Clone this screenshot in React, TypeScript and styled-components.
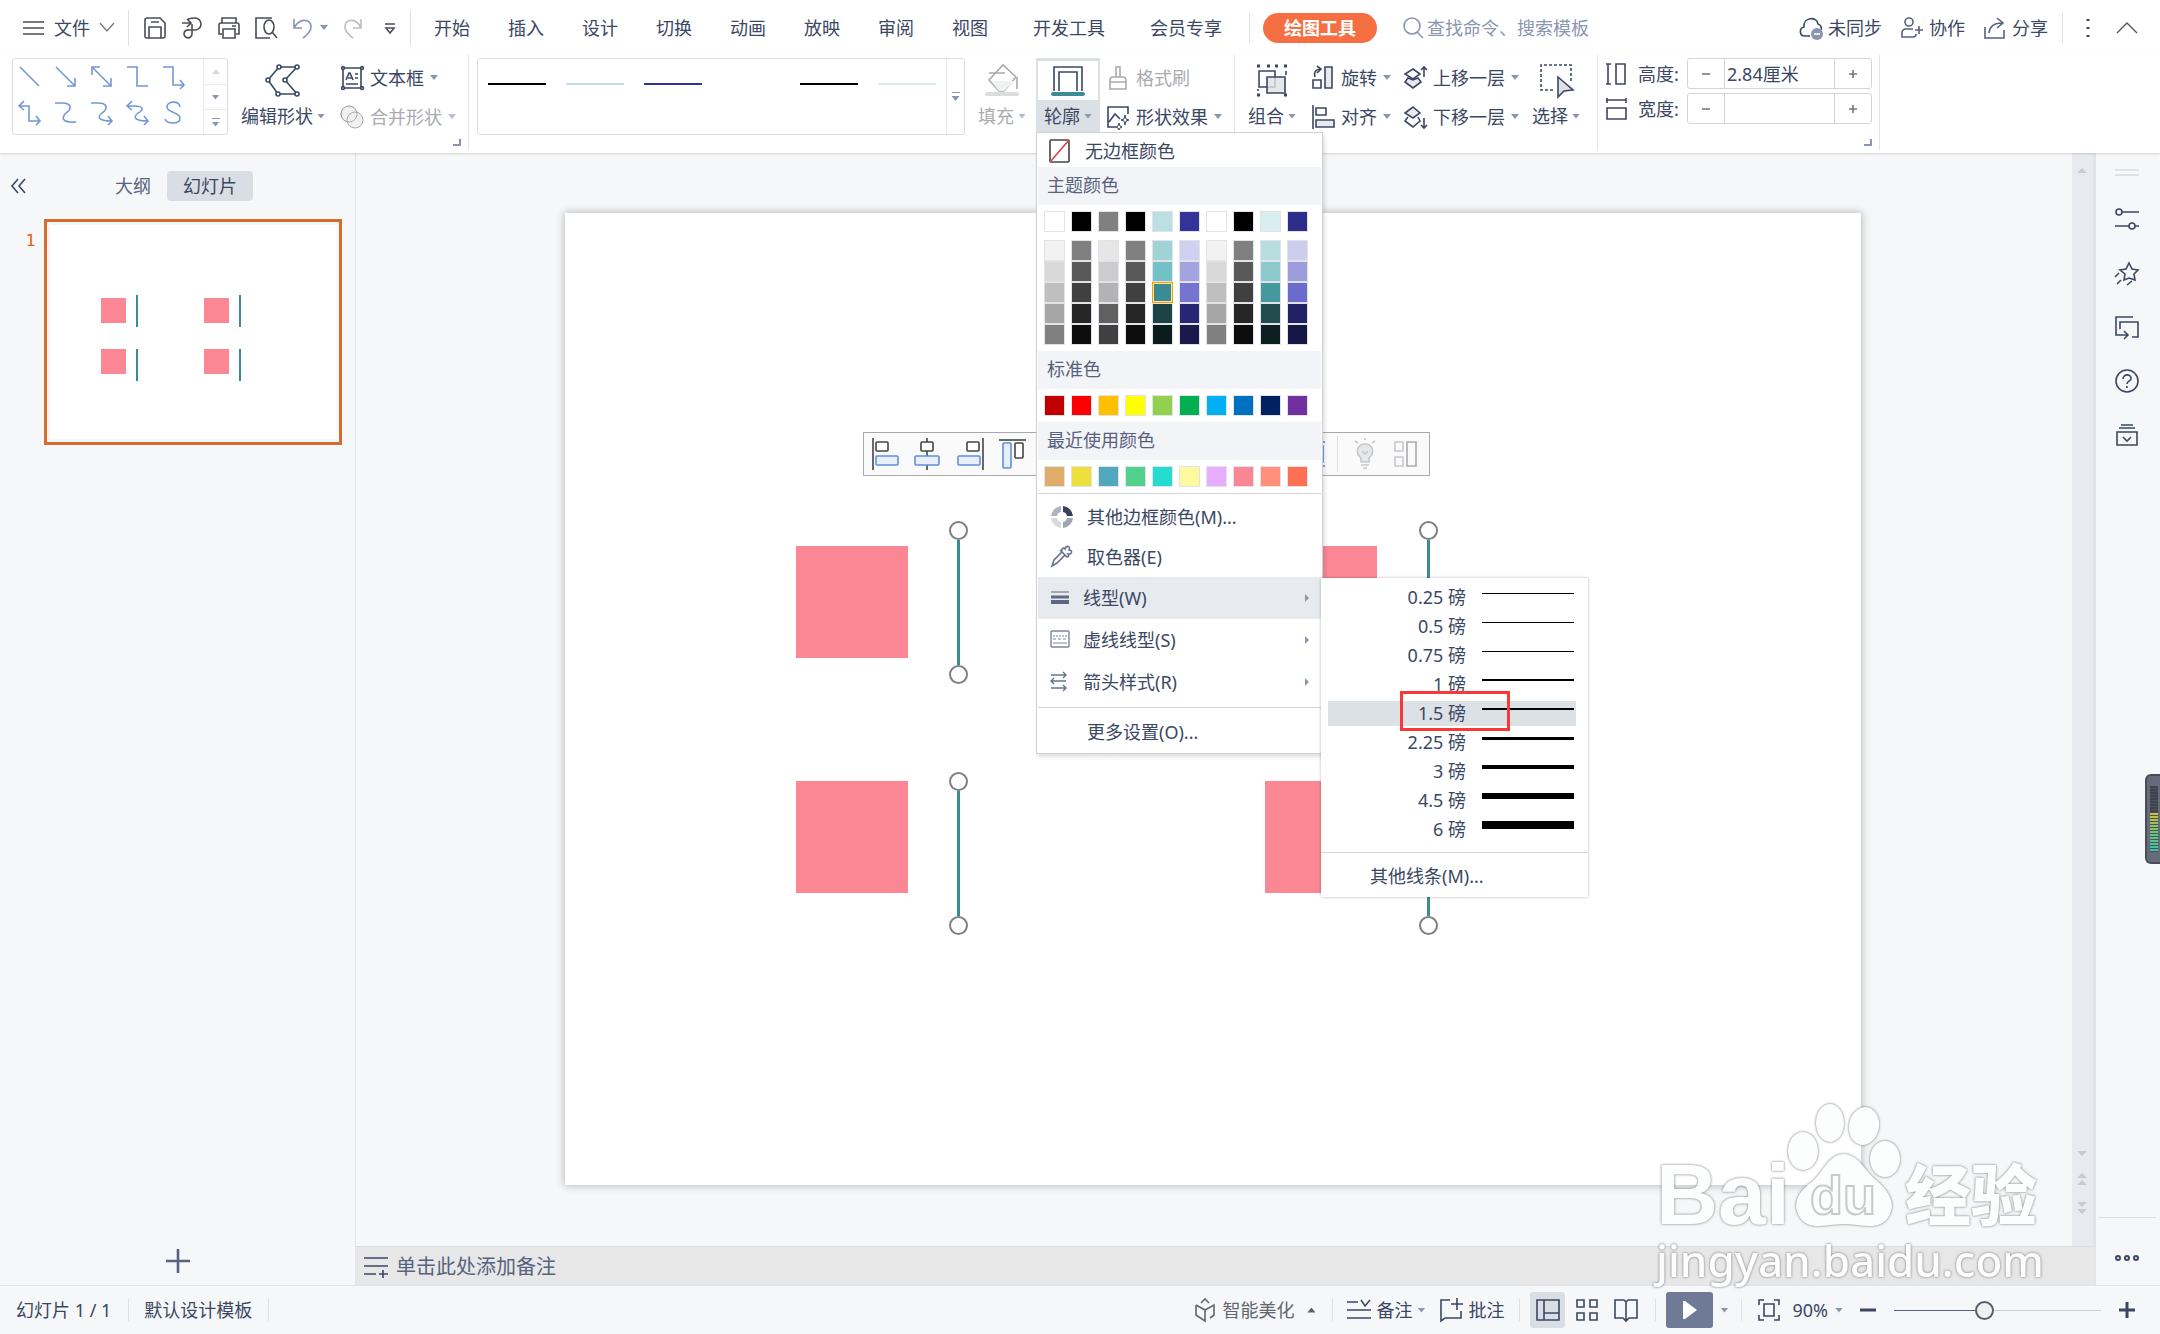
import React from "react";
import styled, { createGlobalStyle, css } from "styled-components";

const ink = "#3b4763";
const soft = "#8a95b0";
const panel = "#f5f7f9";
const line = "#e2e4e9";
const teal = "#3b8b92";
const pink = "#fb8794";

const GlobalStyle = createGlobalStyle`
  *, *::before, *::after { box-sizing: border-box; }
  html, body { margin: 0; padding: 0; height: 100%; }
  body, button, input {
    font-family: "Noto Sans", "Noto Sans CJK SC", sans-serif;
    font-size: 18px;
    line-height: 24px;
    font-weight: 400;
    color: ${ink};
  }
  button { background: none; border: 0; padding: 0; margin: 0; cursor: pointer; white-space: nowrap; }
`;

const Page = styled.div`
  display: flex;
  flex-direction: column;
  height: 100vh;
  background: ${panel};
  overflow: hidden;
`;

/* ---------- icons ---------- */

const Svg = styled.svg`
  display: block;
  flex: none;
  fill: none;
  stroke: currentColor;
  overflow: visible;
`;

type IconProps = { w?: number; h?: number; sw?: number; color?: string; children: React.ReactNode };
const Icon = ({ w = 24, h = 24, sw = 1.6, color, children }: IconProps) => (
  <Svg width={w} height={h} viewBox={`0 0 ${w} ${h}`} strokeWidth={sw} color={color} aria-hidden="true">
    {children}
  </Svg>
);

const Caret = styled.span<{ $dim?: boolean; $up?: boolean }>`
  flex: none;
  width: 8px;
  height: 5px;
  background: ${(p) => (p.$up ? "#5c5f66" : p.$dim ? "#b6bdcc" : soft)};
  clip-path: ${(p) => (p.$up ? "polygon(50% 0, 100% 100%, 0 100%)" : "polygon(0 0, 100% 0, 50% 100%)")};
`;

const Rule = styled.span<{ $h?: number; $l?: number; $r?: number }>`
  flex: none;
  width: 1px;
  height: ${(p) => p.$h ?? 36}px;
  margin: 0 ${(p) => p.$r ?? 14}px 0 ${(p) => p.$l ?? 14}px;
  background: #dfe1e6;
`;

/* ---------- top bar ---------- */

const TopBar = styled.header`
  display: flex;
  align-items: center;
  flex: none;
  height: 55px;
  padding: 0 22px;
  background: #fff;
`;

const FileButton = styled.button`
  display: flex;
  align-items: center;
  gap: 10px;
`;

const QuickBar = styled.div`
  display: flex;
  align-items: center;
  gap: 13px;
`;

const QuickButton = styled.button<{ $color?: string }>`
  display: flex;
  align-items: center;
  gap: 5px;
  color: ${(p) => p.$color ?? "#4a4d55"};
`;

const Tabs = styled.nav`
  display: flex;
  align-items: center;
`;

const Tab = styled.button<{ $wide?: boolean }>`
  padding: 0 19px;
  margin-left: ${(p) => (p.$wide ? 7 : 0)}px;
`;

const ActiveTab = styled.button`
  height: 30px;
  padding: 0 21px;
  border-radius: 15px;
  background: #f66f43;
  color: #fff;
  font-weight: 700;
`;

const Search = styled.label`
  display: flex;
  align-items: center;
  gap: 2px;
  margin-left: 24px;
  color: ${soft};
`;

const SearchInput = styled.input`
  width: 180px;
  padding: 0;
  border: 0;
  outline: 0;
  background: none;
  &::placeholder { color: ${soft}; opacity: 1; }
`;

const TopActions = styled.div`
  display: flex;
  align-items: center;
  gap: 18px;
  margin-left: auto;
`;

const IconButton = styled.button<{ $gap?: number; $color?: string }>`
  display: flex;
  align-items: center;
  gap: ${(p) => p.$gap ?? 5}px;
  color: ${(p) => p.$color ?? ink};
`;

/* ---------- ribbon ---------- */

const Ribbon = styled.div`
  position: relative;
  z-index: 5;
  display: flex;
  align-items: flex-start;
  flex: none;
  height: 98px;
  padding-left: 12px;
  background: #fff;
  box-shadow: 0 1px 2px rgba(0, 0, 0, 0.16);
`;

const Group = styled.section<{ $pad?: number }>`
  position: relative;
  display: flex;
  align-items: flex-start;
  flex: none;
  height: 95px;
  padding: 3px ${(p) => p.$pad ?? 12}px 0 0;
  border-right: 1px solid ${line};
`;

const Launcher = styled.button`
  position: absolute;
  right: 7px;
  bottom: 4px;
  width: 8px;
  height: 7px;
  border: solid ${soft};
  border-width: 0 2px 2px 0;
`;

const ShapeGallery = styled.div`
  display: grid;
  grid-template-columns: 1fr 24px;
  width: 216px;
  height: 77px;
  border: 1px solid #dcdee2;
  border-radius: 3px;
`;

const ShapeGrid = styled.div`
  display: grid;
  grid-template-columns: repeat(5, 36px);
  grid-template-rows: repeat(2, 36px);
  align-items: center;
  padding-left: 5px;
`;

const GalleryScroll = styled.div`
  display: grid;
  grid-template-rows: repeat(3, 1fr);
  border-left: 1px solid #e8eaee;
  & > button { display: flex; flex-direction: column; gap: 3px; align-items: center; justify-content: center; }
  & > button + button { border-top: 1px solid #e8eaee; }
`;

const Bar = styled.span`
  width: 8px;
  height: 1px;
  background: ${soft};
`;

const BigButton = styled.button<{ $dim?: boolean }>`
  display: flex;
  flex-direction: column;
  align-items: center;
  gap: 7px;
  margin-left: 13px;
  padding-top: 5px;
  color: ${(p) => (p.$dim ? "#a9abb0" : ink)};
`;

const Caption = styled.span`
  display: flex;
  align-items: center;
  gap: 4px;
`;

const Stack = styled.div<{ $l?: number }>`
  display: flex;
  flex-direction: column;
  margin-left: ${(p) => p.$l ?? 15}px;
`;

const SmallButton = styled.button<{ $dim?: boolean }>`
  display: flex;
  align-items: center;
  gap: 6px;
  height: 39px;
  color: ${(p) => (p.$dim ? "#a9abb0" : ink)};
`;

const StyleGallery = styled.div`
  display: grid;
  grid-template-columns: 1fr 18px;
  width: 488px;
  height: 77px;
  margin-left: 8px;
  border: 1px solid #dcdee2;
  border-radius: 3px;
`;

const StyleLines = styled.div`
  display: flex;
  gap: 20px;
  padding: 24px 10px;
`;

const StyleLine = styled.button<{ $c: string }>`
  width: 58px;
  height: 2px;
  background: ${(p) => p.$c};
`;

const MoreStyles = styled.button`
  display: flex;
  flex-direction: column;
  gap: 3px;
  align-items: center;
  justify-content: center;
  border-left: 1px solid #e8eaee;
`;

const OutlineWrap = styled.div`
  position: relative;
  margin-left: 10px;
`;

const OutlineButton = styled.button`
  display: flex;
  flex-direction: column;
  align-items: center;
  gap: 4px;
  width: 64px;
  height: 74px;
  padding: 3px 2px;
  background: #dbe0e5;
`;

const OutlineFace = styled.span`
  display: flex;
  align-items: center;
  justify-content: center;
  width: 60px;
  height: 39px;
  background: #fff;
`;

const SizeFields = styled.div`
  display: flex;
  flex-direction: column;
  gap: 4px;
  margin-left: 8px;
`;

const SizeRow = styled.div`
  display: grid;
  grid-template-columns: 32px 49px 185px;
  align-items: center;
  height: 31px;
`;

const Stepper = styled.div`
  display: grid;
  grid-template-columns: 36px 1fr 36px;
  height: 31px;
  border: 1px solid #d3d5da;
  border-radius: 3px;
`;

const StepButton = styled.button`
  display: flex;
  align-items: center;
  justify-content: center;
  color: #777;
`;

const StepInput = styled.input`
  min-width: 0;
  padding: 0 2px;
  border: solid #d3d5da;
  border-width: 0 1px;
  outline: 0;
  background: none;
`;

/* ---------- outline menu ---------- */

const Menu = styled.div`
  position: absolute;
  z-index: 10;
  top: 100%;
  left: 0;
  width: 287px;
  padding: 1px;
  background: #fff;
  border: 1px solid #cfd0d3;
  box-shadow: 2px 3px 4px rgba(0, 0, 0, 0.12);
`;

const NoneRow = styled.button`
  display: flex;
  align-items: center;
  gap: 13px;
  width: 100%;
  height: 33px;
  padding: 0 10px;
`;

const MenuTitle = styled.h2`
  margin: 0;
  padding: 6px 9px 8px;
  background: #f3f4f7;
  color: #56627f;
  font-size: 18px;
  line-height: 24px;
  font-weight: 400;
`;

const Palette = styled.div`
  display: flex;
  flex-direction: column;
  gap: 8px;
  padding: 6px;
`;

const SwatchGrid = styled.div`
  display: grid;
  grid-template-columns: repeat(10, 21px);
  column-gap: 6px;
`;

const Swatch = styled.button<{ $c: string; $on?: boolean }>`
  width: 21px;
  height: 21px;
  border: 1px solid #e2e3e8;
  background: ${(p) => p.$c};
  ${(p) =>
    p.$on &&
    css`
      border-color: #f7a100;
      box-shadow: inset 0 0 0 1px #ffe1a0;
    `}
`;

const MenuRule = styled.hr`
  height: 1px;
  margin: 0;
  border: 0;
  background: #d3d4d7;
`;

const MenuList = styled.div`
  padding: 3px 0 4px;
`;

const ItemWrap = styled.div`
  position: relative;
`;

const MenuItem = styled.button<{ $tall?: boolean; $on?: boolean }>`
  display: flex;
  align-items: center;
  gap: ${(p) => (p.$tall ? 9 : 13)}px;
  width: 100%;
  height: ${(p) => (p.$tall ? 42 : 40)}px;
  padding: 0 12px;
  background: ${(p) => (p.$on ? "#e7eaef" : "none")};
`;

const MoreItem = styled.button`
  display: block;
  width: 100%;
  height: 44px;
  padding: 4px 0 0 49px;
  text-align: left;
`;

const Arrow = styled.span`
  width: 4px;
  height: 8px;
  margin-left: auto;
  background: ${soft};
  clip-path: polygon(0 0, 100% 50%, 0 100%);
`;

const SubMenu = styled.div`
  position: absolute;
  z-index: 11;
  top: 1px;
  left: 100%;
  width: 267px;
  background: #fff;
  box-shadow: 0 0 3px rgba(0, 0, 0, 0.28);
`;

const WeightList = styled.div`
  position: relative;
  display: flex;
  flex-direction: column;
  gap: 4px;
  padding: 7px 12px 10px 7px;
`;

const WeightRow = styled.button<{ $on?: boolean }>`
  display: grid;
  grid-template-columns: 138px 92px;
  column-gap: 16px;
  height: 25px;
  background: ${(p) => (p.$on ? "#dce1e5" : "none")};
  text-align: right;
`;

const WeightCell = styled.span`
  display: flex;
  align-items: center;
  height: 16px;
`;

const WeightLine = styled.span<{ $h: number }>`
  width: 100%;
  height: ${(p) => p.$h}px;
  background: #000;
`;

const Highlight = styled.span`
  position: absolute;
  top: 113px;
  left: 79px;
  width: 110px;
  height: 40px;
  border: 3px solid #fb3737;
  pointer-events: none;
`;

const OtherLines = styled.button`
  display: block;
  width: 100%;
  height: 44px;
  padding: 2px 0 0 49px;
  text-align: left;
`;

/* ---------- workspace ---------- */

const Main = styled.main`
  display: grid;
  grid-template-columns: 356px minmax(0, 1fr) 65px;
  flex: 1;
  min-height: 0;
`;

const Sidebar = styled.aside`
  display: flex;
  flex-direction: column;
  border-right: 1px solid ${line};
`;

const SideTabs = styled.div`
  display: flex;
  align-items: center;
  padding: 18px 0 0 10px;
`;

const SideTab = styled.button<{ $on?: boolean }>`
  height: 30px;
  padding: 0 16px;
  border-radius: 4px;
  color: ${(p) => (p.$on ? ink : "#56627f")};
  background: ${(p) => (p.$on ? "#d9dee4" : "none")};
`;

const Collapse = styled.button`
  margin-right: 72px;
`;

const ThumbRow = styled.div`
  display: grid;
  grid-template-columns: 44px 298px;
  margin-top: 18px;
`;

const ThumbNumber = styled.span`
  padding: 10px 8px 0 0;
  color: #e0641a;
  font-family: "DejaVu Sans", sans-serif;
  font-size: 16px;
  text-align: right;
`;

const Thumb = styled.button`
  height: 226px;
  padding: 3px;
  border: 3px solid #d66b2b;
`;

const ThumbSlide = styled.span`
  position: relative;
  display: block;
  height: 214px;
  background: #fff;
`;

const Mini = styled.span<{ $x: number; $y: number; $w: number; $h: number; $c: string }>`
  position: absolute;
  left: ${(p) => p.$x}px;
  top: ${(p) => p.$y}px;
  width: ${(p) => p.$w}px;
  height: ${(p) => p.$h}px;
  background: ${(p) => p.$c};
`;

const AddSlide = styled.button`
  display: flex;
  justify-content: center;
  margin: auto 0 12px;
`;

const Editor = styled.div`
  display: grid;
  grid-template-columns: minmax(0, 1fr) 23px;
  grid-template-rows: minmax(0, 1fr) 39px;
  position: relative;
`;

const Canvas = styled.div`
  display: flex;
  align-items: center;
  justify-content: center;
  padding: 0 2px 1px 0;
  overflow: hidden;
`;

const Slide = styled.div`
  position: relative;
  flex: none;
  width: 1296px;
  height: 972px;
  background: #fff;
  box-shadow: 0 0 8px 1px rgba(0, 0, 0, 0.24);
`;

const Square = styled.div<{ $x: number; $y: number }>`
  position: absolute;
  left: ${(p) => p.$x}px;
  top: ${(p) => p.$y}px;
  width: 112px;
  height: 112px;
  background: ${pink};
`;

const Connector = styled.div<{ $x: number; $y: number }>`
  position: absolute;
  left: ${(p) => p.$x - 9}px;
  top: ${(p) => p.$y}px;
  display: flex;
  flex-direction: column;
  align-items: center;
  width: 19px;
  height: 163px;
`;

const Handle = styled.span`
  flex: none;
  width: 19px;
  height: 19px;
  border: 2px solid #808080;
  border-radius: 50%;
  background: #fff;
`;

const Stem = styled.span`
  flex: 1;
  width: 3px;
  background: ${teal};
`;

const FloatBar = styled.div`
  position: absolute;
  left: 298px;
  top: 219px;
  display: flex;
  align-items: center;
  gap: 14px;
  width: 567px;
  height: 44px;
  padding: 0 9px 0 8px;
  border: 1px solid #a9a9ab;
  background: #fafafb;
`;

const FloatRight = styled.div`
  display: flex;
  align-items: center;
  gap: 13px;
  margin-left: auto;
`;

const ScrollTrack = styled.div`
  display: flex;
  flex-direction: column;
  align-items: center;
  gap: 17px;
  padding: 15px 1px 32px 0;
  background: #e9eaf0;
  border-right: 2px solid #e2e4ec;
`;

const TrackArrow = styled.button<{ $push?: boolean }>`
  display: block;
  ${(p) => p.$push && "margin-top: auto;"}
`;

const Notes = styled.button`
  grid-column: 1 / -1;
  display: flex;
  align-items: center;
  gap: 8px;
  padding: 2px 8px 0;
  border-top: 1px solid #dcdee3;
  background: #e7e7e7;
  color: #56627f;
  font-size: 20px;
`;

const Dock = styled.aside`
  position: relative;
  display: flex;
  flex-direction: column;
  align-items: center;
  gap: 30px;
  padding: 16px 2px 0 0;
  border-left: 1px solid ${line};
`;

const DockFoot = styled.div`
  display: flex;
  justify-content: center;
  width: 58px;
  height: 68px;
  margin-top: auto;
  padding-top: 28px;
  border-top: 1px solid #dcdee3;
`;

const DockFootButton = styled.button`
  height: 24px;
`;

const Meter = styled.div`
  position: absolute;
  right: 0;
  top: 621px;
  display: flex;
  justify-content: center;
  width: 15px;
  height: 90px;
  padding: 10px 0;
  border: 2px solid #4a4d58;
  border-right: 0;
  border-radius: 6px 0 0 6px;
  background: #666b7c;
`;

const MeterBars = styled.span`
  width: 8px;
  background:
    repeating-linear-gradient(to bottom, transparent 0 2px, #4c505c 2px 3px),
    linear-gradient(to bottom, #3f434e 0 40%, #d8bf36 40%, #7cc56a 65%, #35c3ac);
`;

/* ---------- watermark ---------- */

const Watermark = styled.div`
  position: absolute;
  z-index: 2;
  right: 51px;
  bottom: -5px;
  display: flex;
  flex-direction: column;
  color: #fcfdfd;
  pointer-events: none;
  filter: drop-shadow(0 0 1px rgba(120, 120, 120, 0.6)) drop-shadow(0 0 1px rgba(120, 120, 120, 0.5));
`;

const MarkUrl = styled.span`
  font-size: 44px;
  line-height: 60px;
  font-weight: 500;
`;

/* ---------- status bar ---------- */

const StatusBar = styled.footer`
  display: flex;
  align-items: center;
  flex: none;
  height: 49px;
  padding: 0 23px 0 16px;
  border-top: 1px solid ${line};
`;

const StatusRight = styled.div`
  display: flex;
  align-items: center;
  margin-left: auto;
`;

const ViewSwitch = styled.div`
  display: flex;
  gap: 4px;
`;

const ViewButton = styled.button<{ $on?: boolean }>`
  display: flex;
  align-items: center;
  justify-content: center;
  width: 35px;
  height: 36px;
  border-radius: 3px;
  background: ${(p) => (p.$on ? "#d9dee4" : "none")};
`;

const PlayButton = styled.button`
  display: flex;
  align-items: center;
  justify-content: center;
  width: 47px;
  height: 36px;
  margin-right: 7px;
  border-radius: 3px;
  background: #6f7a96;
`;

const ZoomGroup = styled.div`
  display: flex;
  align-items: center;
  gap: 16px;
`;

const ZoomSlider = styled.input`
  appearance: none;
  width: 207px;
  height: 20px;
  margin: 0;
  background: linear-gradient(to right, #56627f 43%, #c9cdd6 43%) center / 100% 1px no-repeat;
  &::-webkit-slider-thumb {
    appearance: none;
    width: 19px;
    height: 19px;
    border: 2px solid #5c5f66;
    border-radius: 50%;
    background: #f0f0f1;
  }
`;

/* ---------- data ---------- */

const theme = ["#fff", "#000", "#808080", "#000", "#bbe0e3", "#333399", "#fff", "#000", "#daedef", "#2d2d8a"];
const shades = [
  "#f2f2f2", "#808080", "#e6e6e6", "#808080", "#9fd3d6", "#d0d0f0", "#f2f2f2", "#808080", "#b9dee0", "#cdcdee",
  "#d9d9d9", "#595959", "#cccccc", "#595959", "#73c0c6", "#a3a3e0", "#d9d9d9", "#595959", "#8cc9cd", "#9d9ddd",
  "#bfbfbf", "#404040", "#b3b3b3", "#404040", "#3b8b92", "#7575d1", "#bfbfbf", "#404040", "#45989d", "#6b6bcd",
  "#a6a6a6", "#262626", "#606060", "#262626", "#1c4447", "#262673", "#a6a6a6", "#262626", "#234c4e", "#212166",
  "#808080", "#0d0d0d", "#404040", "#0d0d0d", "#0c1b1c", "#19194c", "#808080", "#0d0d0d", "#0d1f20", "#161644",
];
const standard = ["#c00000", "#ff0000", "#ffc000", "#ffff00", "#92d050", "#00b050", "#00b0f0", "#0070c0", "#002060", "#7030a0"];
const recent = ["#e0ac69", "#eee03c", "#4fa8be", "#52d18d", "#26dbd0", "#fcf99f", "#e5aeff", "#fb8794", "#ff917c", "#ff6f52"];
const weights: [string, number][] = [
  ["0.25", 1], ["0.5", 1], ["0.75", 1], ["1", 2], ["1.5", 2], ["2.25", 3], ["3", 4], ["4.5", 6], ["6", 8],
];
const tabs = ["开始", "插入", "设计", "切换", "动画", "放映", "审阅", "视图", "开发工具", "会员专享"];
const spots = [
  [231, 333, 393, 308],
  [700, 333, 863, 308],
  [231, 568, 393, 559],
  [700, 568, 863, 559],
];
const shapePaths = [
  "M2 2 L21 21",
  "M2 2 L21 21 M21 13 V21 H13",
  "M2 2 L21 21 M21 13 V21 H13 M2 10 V2 H10",
  "M1 2 H11 V21 H22",
  "M1 2 H11 V20 H22 M18 15 L22 20 L18 24",
  "M2 5 H11 V20 H22 M18 15 L22 20 L18 24 M6 0 L1 5 L6 9",
  "M1 2 H8 C18 2 18 8 12 12 C6 18 10 22 22 21",
  "M1 2 H8 C18 2 18 8 12 12 C6 17 10 20 22 20 M18 15 L22 20 L18 24",
  "M2 5 H8 C18 5 18 9 12 12 C6 17 10 20 22 20 M18 15 L22 20 L18 24 M6 0 L1 5 L6 9",
  "M18 6 C17 -1 5 0 5 6 C5 12 18 11 18 17 C18 24 5 23 3 18",
];

const Swatches = ({ colors, on }: { colors: string[]; on?: number }) => (
  <SwatchGrid>
    {colors.map((c, i) => (
      <Swatch key={i} $c={c} $on={i === on} aria-label={c} />
    ))}
  </SwatchGrid>
);

const LineMenu = () => (
  <SubMenu>
    <WeightList>
      {weights.map(([name, h]) => (
        <WeightRow key={name} $on={name === "1.5"}>
          <span>{name} 磅</span>
          <WeightCell>
            <WeightLine $h={h} />
          </WeightCell>
        </WeightRow>
      ))}
      <Highlight />
    </WeightList>
    <MenuRule />
    <OtherLines>其他线条(M)...</OtherLines>
  </SubMenu>
);

const OutlineMenu = () => (
  <Menu>
    <NoneRow>
      <Icon>
        <rect x="2" y="1" width="19" height="22" rx="1" stroke="#444" />
        <path d="M2 23 L21 1" stroke="#d8434a" />
      </Icon>
      无边框颜色
    </NoneRow>
    <MenuTitle>主题颜色</MenuTitle>
    <Palette>
      <Swatches colors={theme} />
      <Swatches colors={shades} on={24} />
    </Palette>
    <MenuTitle>标准色</MenuTitle>
    <Palette>
      <Swatches colors={standard} />
    </Palette>
    <MenuTitle>最近使用颜色</MenuTitle>
    <Palette>
      <Swatches colors={recent} />
    </Palette>
    <MenuRule />
    <MenuList>
      <MenuItem>
        <Icon>
          <g stroke="none">
            <path d="M13 1 A11 11 0 0 1 23 11 H17 A5 5 0 0 0 13 7 Z" fill="#36425c" />
            <path d="M23 13 A11 11 0 0 1 13 23 V17 A5 5 0 0 0 17 13 Z" fill="#9fa5b3" />
            <path d="M11 23 A11 11 0 0 1 1 13 H7 A5 5 0 0 0 11 17 Z" fill="#d8dade" />
            <path d="M1 11 A11 11 0 0 1 11 1 V7 A5 5 0 0 0 7 11 Z" fill="#afb4bf" />
          </g>
        </Icon>
        其他边框颜色(M)...
      </MenuItem>
      <MenuItem>
        <Icon color="#68738c">
          <path d="M2 21 L4 15 L12 7 L15 10 L7 18 Z M10 5 L17 12 M12 7 C11 4 13 2 15 4 C16 0 21 1 19 5 C23 5 22 10 18 9 C20 12 17 13 15 10" />
        </Icon>
        取色器(E)
      </MenuItem>
      <ItemWrap>
        <MenuItem $tall $on>
          <Icon color="#5d6780">
            <path d="M1 6 H19" strokeWidth="1" />
            <path d="M1 11 H19" strokeWidth="3" />
            <path d="M1 16 H19" strokeWidth="4" />
          </Icon>
          线型(W)
          <Arrow />
        </MenuItem>
        <LineMenu />
      </ItemWrap>
      <MenuItem $tall>
        <Icon color="#7d879c" sw={1.4}>
          <rect x="1" y="3" width="18" height="16" rx="1" />
          <path d="M3 8 H17" strokeDasharray="2 1" strokeWidth="1" />
          <path d="M3 11 H17" strokeDasharray="3 2" strokeWidth="1" />
          <path d="M3 15 H17" strokeWidth="1" />
        </Icon>
        虚线线型(S)
        <Arrow />
      </MenuItem>
      <MenuItem $tall>
        <Icon color="#68738c" sw={1.4}>
          <path d="M1 5 H16 M13 2 L16 5 L13 8 M16 11 H1 M4 8 L1 11 L4 14 M1 18 H16 M13 15 L16 18 L13 21" />
        </Icon>
        箭头样式(R)
        <Arrow />
      </MenuItem>
    </MenuList>
    <MenuRule />
    <MoreItem>更多设置(O)...</MoreItem>
  </Menu>
);

const Top = () => (
  <TopBar>
    <FileButton>
      <Icon w={22} h={16} color="#4a4d55">
        <path d="M1 2 H22 M1 8 H22 M1 14 H22" />
      </Icon>
      文件
      <Icon w={14} h={9} sw={1.3} color="#777">
        <path d="M0 0 L7 8 L14 0" />
      </Icon>
    </FileButton>
    <Rule $l={14} />
    <QuickBar>
      <QuickButton aria-label="保存">
        <Icon>
          <path d="M4 2 H17 L22 7 V20 Q22 22 20 22 H4 Q2 22 2 20 V4 Q2 2 4 2 Z M6 22 V11 H18 V22 M8 6 H16" />
        </Icon>
      </QuickButton>
      <QuickButton aria-label="输出">
        <Icon>
          <path d="M2 7 H10 M7 3 L11 7 L7 11 M8 3 Q12 2 15 2 A6 6 0 0 1 15 14 H9 A4 4 0 1 0 12 18 V8" />
        </Icon>
      </QuickButton>
      <QuickButton aria-label="打印">
        <Icon>
          <path d="M5 7 V2 H19 V7 M5 18 H2 V9 Q2 7 4 7 H20 Q22 7 22 9 V18 H19 M6 13 H18 V22 H6 Z M15 10 H19" />
        </Icon>
      </QuickButton>
      <QuickButton aria-label="预览">
        <Icon>
          <path d="M11 22 H2 V2 H18 M11 22 H16" />
          <ellipse cx="15" cy="11" rx="5" ry="7" />
          <path d="M18 16 L23 22" />
        </Icon>
      </QuickButton>
      <QuickButton aria-label="撤销" $color={soft}>
        <Icon>
          <path d="M3 3 V12 H11 M3 12 C8 2 20 2 20 11 Q20 16 12 22" />
        </Icon>
        <Caret />
      </QuickButton>
      <QuickButton aria-label="恢复" $color="#bcbfc4">
        <Icon>
          <path d="M20 3 V12 H12 M20 12 C16 2 4 2 4 11 Q4 16 12 22" />
        </Icon>
      </QuickButton>
      <QuickButton aria-label="更多">
        <Icon>
          <path d="M7 8 H17 M8 12 H16 L12 17 Z" />
        </Icon>
      </QuickButton>
    </QuickBar>
    <Rule $l={8} $r={4} />
    <Tabs>
      {tabs.map((t) => (
        <Tab key={t} $wide={t.length > 2}>
          {t}
        </Tab>
      ))}
    </Tabs>
    <Rule $h={30} $l={8} $r={13} />
    <ActiveTab>绘图工具</ActiveTab>
    <Search>
      <Icon>
        <circle cx="11" cy="10" r="8" />
        <path d="M16 16 L22 22" />
      </Icon>
      <SearchInput placeholder="查找命令、搜索模板" />
    </Search>
    <TopActions>
      <IconButton>
        <Icon>
          <path d="M11 20 H6 C0 20 0 12 5 11 C4 1 18 0 19 8 C22 9 23 12 22 14" />
          <circle cx="18" cy="18" r="6" fill={soft} stroke="none" />
          <path d="M15 18 H21" stroke="#fff" />
        </Icon>
        未同步
      </IconButton>
      <IconButton>
        <Icon color="#56627f">
          <circle cx="9" cy="6" r="4" />
          <path d="M13 13 H6 Q2 13 2 17 V21 H13 Q16 21 16 18 M19 10 V18 M15 14 H23" />
        </Icon>
        协作
      </IconButton>
      <IconButton>
        <Icon color="#56627f">
          <path d="M2 11 V22 H21 V14 M6 17 Q7 7 19 7 M14 2 L20 7 L14 12" />
        </Icon>
        分享
      </IconButton>
    </TopActions>
    <Rule $h={30} $l={14} $r={22} />
    <IconButton aria-label="更多选项" $gap={0}>
      <Icon w={6} h={20} sw={3}>
        <path d="M3 1 V3 M3 9 V11 M3 17 V19" />
      </Icon>
    </IconButton>
    <Rule $h={0} $l={12} $r={12} />
    <IconButton aria-label="收起">
      <Icon w={22} h={12} sw={1.4} color="#555">
        <path d="M1 11 L11 1 L21 11" />
      </Icon>
    </IconButton>
  </TopBar>
);

const SizeField = ({ id, label, value, icon }: { id: string; label: string; value: string; icon: React.ReactNode }) => (
  <SizeRow>
    {icon}
    <label htmlFor={id}>{label}</label>
    <Stepper>
      <StepButton aria-label="减小">
        <Icon w={8} h={8}>
          <path d="M0 4 H8" />
        </Icon>
      </StepButton>
      <StepInput id={id} defaultValue={value} />
      <StepButton aria-label="增大">
        <Icon w={8} h={8}>
          <path d="M0 4 H8 M4 0 V8" />
        </Icon>
      </StepButton>
    </Stepper>
  </SizeRow>
);

const Tools = () => (
  <Ribbon>
    <Group>
      <ShapeGallery>
        <ShapeGrid>
          {shapePaths.map((d) => (
            <IconButton key={d} $color="#7597da" aria-label="线条">
              <Icon>
                <path d={d} />
              </Icon>
            </IconButton>
          ))}
        </ShapeGrid>
        <GalleryScroll>
          <button aria-label="上一行">
            <Icon w={8} h={5}>
              <path d="M0 5 L4 0 L8 5 Z" fill="#d3d8e2" stroke="none" />
            </Icon>
          </button>
          <button aria-label="下一行">
            <Caret />
          </button>
          <button aria-label="全部形状">
            <Bar />
            <Caret />
          </button>
        </GalleryScroll>
      </ShapeGallery>
      <BigButton>
        <Icon w={36} h={34}>
          <path d="M14 4 H32 L20 17 L32 31 H13 L3 17 Z" />
          <g fill="#fff">
            <circle cx="14" cy="4" r="2" />
            <circle cx="32" cy="4" r="2" />
            <circle cx="20" cy="17" r="2" />
            <circle cx="32" cy="31" r="2" />
            <circle cx="13" cy="31" r="2" />
            <circle cx="3" cy="17" r="2" />
          </g>
        </Icon>
        <Caption>
          编辑形状
          <Caret />
        </Caption>
      </BigButton>
      <Stack>
        <SmallButton>
          <Icon>
            <path d="M3 2 H21 V22 H3 Z" />
            <path d="M6 14 L9 7 H10 L13 14 M8 12 H12 M15 8 H18 M15 12 H18 M6 18 H18" />
            <g fill="#fff">
              <circle cx="3" cy="2" r="1.4" />
              <circle cx="22" cy="2" r="1.4" />
              <circle cx="3" cy="22" r="1.4" />
              <circle cx="22" cy="22" r="1.4" />
            </g>
          </Icon>
          文本框
          <Caret />
        </SmallButton>
        <SmallButton $dim>
          <Icon sw={1}>
            <circle cx="9" cy="9" r="8" fill="#f1f1f2" />
            <circle cx="15" cy="15" r="8" fill="#f1f1f2" />
            <circle cx="9" cy="9" r="8" />
          </Icon>
          合并形状
          <Caret $dim />
        </SmallButton>
      </Stack>
      <Launcher aria-label="形状选项" />
    </Group>
    <Group>
      <StyleGallery>
        <StyleLines>
          {["#000", "#bbe0e3", "#333399", "#fff", "#000", "#daedef"].map((c, i) => (
            <StyleLine key={i} $c={c} aria-label="线条样式" />
          ))}
        </StyleLines>
        <MoreStyles aria-label="更多样式">
          <Bar />
          <Caret />
        </MoreStyles>
      </StyleGallery>
      <BigButton $dim>
        <Icon w={34} h={34}>
          <path d="M4 17 L18 2 L31 14 L19 28 H14 Z" fill="#fff" />
          <path d="M6 18 H29 L19 28 H14 Z" fill="#f0f1f1" stroke="none" />
          <path d="M4 10 H20 M32 14 V26" />
          <path d="M2 31 H32" stroke="#dcdddf" strokeLinecap="round" strokeWidth="4" />
        </Icon>
        <Caption>
          填充
          <Caret $dim />
        </Caption>
      </BigButton>
      <OutlineWrap>
        <OutlineButton>
          <OutlineFace>
            <Icon w={34} h={32}>
              <path d="M3 26 V2 H31 V26 M8 26 V7 H26 V26" />
              <path d="M2 29 H32" stroke={teal} strokeLinecap="round" strokeWidth="4" />
            </Icon>
          </OutlineFace>
          <Caption>
            轮廓
            <Caret />
          </Caption>
        </OutlineButton>
        <OutlineMenu />
      </OutlineWrap>
      <Stack $l={6}>
        <SmallButton $dim>
          <Icon>
            <path d="M10 11 V1 H14 V11 M4 23 V14 Q4 11 7 11 H17 Q20 11 20 14 V23 Z M4 16 H20" />
          </Icon>
          格式刷
        </SmallButton>
        <SmallButton>
          <Icon>
            <path d="M10 22 H2 V2 H22 V9 M3 17 L9 9 L14 14" />
            <path d="M19 10 L20 14 L23 15 L20 16 L19 20 L18 16 L15 15 L18 14 Z M13 18 L14 21 L16 22 L14 23 L13 25 L12 23 L10 22 L12 21 Z" fill="#fff" strokeWidth="1" />
          </Icon>
          形状效果
          <Caret />
        </SmallButton>
      </Stack>
    </Group>
    <Group $pad={17}>
      <BigButton>
        <Icon w={34} h={34}>
          <path d="M4 8 H20 V24 H4 Z" />
          <path d="M12 14 H30 V30 H12 Z" fill="#dfe1e5" fillOpacity="0.8" />
          <path d="M2 3 H5 M29 3 H32 M2 32 H5 M29 32 H32 M12 3 H15 M20 3 H23" strokeWidth="3" />
          <path d="M31 8 V12 M3 26 V28" />
        </Icon>
        <Caption>
          组合
          <Caret />
        </Caption>
      </BigButton>
      <Stack>
        <SmallButton>
          <Icon>
            <path d="M14 1 H21 V22 H14 Z" fill="#e9eaed" />
            <path d="M10 14 H2 V22 H10 Z M4 11 Q2 4 9 3 M6 0 L10 3 L6 7" />
          </Icon>
          旋转
          <Caret />
        </SmallButton>
        <SmallButton>
          <Icon>
            <path d="M2 0 V24 M5 3 H15 V10 H5 Z" />
            <path d="M5 15 H23 V22 H5 Z" fill="#e9eaed" />
          </Icon>
          对齐
          <Caret />
        </SmallButton>
      </Stack>
      <Stack $l={12}>
        <SmallButton>
          <Icon>
            <path d="M10 3 L17 8 L10 13 L2 8 Z" />
            <path d="M5 12 L2 16 L10 22 L18 16 L15 12 L10 14 Z" fill="#e9eaed" />
            <path d="M21 11 V1 M18 4 L21 1 L24 4" />
          </Icon>
          上移一层
          <Caret />
        </SmallButton>
        <SmallButton>
          <Icon>
            <path d="M10 2 L17 8 L10 13 L2 8 Z" fill="#e9eaed" />
            <path d="M5 12 L2 16 L10 22 L17 16 L15 12 M21 13 V23 M18 20 L21 23 L24 20" />
          </Icon>
          下移一层
          <Caret />
        </SmallButton>
      </Stack>
      <BigButton>
        <Icon w={36} h={34}>
          <path d="M15 27 H3 V2 H33 V20" strokeDasharray="3 2" />
          <path d="M20 14 L35 27 L26 28 L20 34 Z" fill="#dfe1e5" />
        </Icon>
        <Caption>
          选择
          <Caret />
        </Caption>
      </BigButton>
    </Group>
    <Group $pad={7}>
      <SizeFields>
        <SizeField
          id="h"
          label="高度:"
          value="2.84厘米"
          icon={
            <Icon w={20}>
              <path d="M0 2 H5 M0 22 H5 M2 2 V22 M10 2 H19 V22 H10 Z" />
            </Icon>
          }
        />
        <SizeField
          id="w"
          label="宽度:"
          value=""
          icon={
            <Icon w={20}>
              <path d="M0 3 H20 M1 1 V6 M20 1 V6 M1 11 H20 V22 H1 Z" />
            </Icon>
          }
        />
      </SizeFields>
      <Launcher aria-label="大小选项" />
    </Group>
  </Ribbon>
);

const guides = [1, 13, 27];

const FloatTools = () => (
  <FloatBar>
    {guides.map((x, i) => (
      <IconButton key={x} aria-label="对齐">
        <Icon w={28} h={32}>
          <path d={`M${x} 0 V32`} stroke="#444" />
          <rect x={[4, 7, 11][i]} y="4" width="12" height="9" rx="1" stroke="#444" fill="#fff" />
          <rect x={[4, 1, 2][i]} y="18" width={[22, 24, 22][i]} height="9" rx="1" stroke="#5f8fdc" fill="#e8effb" />
        </Icon>
      </IconButton>
    ))}
    <IconButton aria-label="顶端对齐">
      <Icon w={28} h={32}>
        <path d="M1 2 H28" stroke="#444" />
        <rect x="5" y="5" width="8" height="25" rx="1" stroke="#5f8fdc" fill="#e8effb" />
        <rect x="17" y="5" width="8" height="15" rx="1" stroke="#444" fill="#fff" />
      </Icon>
    </IconButton>
    <FloatRight>
      <IconButton aria-label="等尺寸">
        <Icon w={28} h={28} color="#4d86f0">
          <rect x="4" y="6" width="23" height="16" fill="#e8effb" />
          <path d="M20 2 H29 M20 26 H29" />
        </Icon>
      </IconButton>
      <Rule $l={0} $r={0} />
      <IconButton aria-label="灵感">
        <Icon w={28} h={32} color="#c6c8cb">
          <path d="M10 20 C3 14 7 6 14 6 C21 6 25 14 18 20 V24 H10 Z M10 27 H18 M12 30 H16" fill="#e6e7e9" />
          <path d="M11 13 L14 16 L17 13 M14 0 V2 M4 3 L7 5 M24 3 L21 5" />
        </Icon>
      </IconButton>
      <IconButton aria-label="版式">
        <Icon w={28} h={28} color="#c6c8cb">
          <path d="M3 2 H11 V11 H3 Z M3 17 H11 V26 H3 Z" />
          <path d="M15 2 H24 V26 H15 Z" stroke="#a9abae" />
        </Icon>
      </IconButton>
    </FloatRight>
  </FloatBar>
);

const Mark = () => (
  <Watermark>
    <Svg width={386} height={128} viewBox="0 0 386 128" stroke="none" fill="currentColor" style={{ stroke: "none", fill: "currentColor" }}>
      <text x="0" y="122" fontSize="86" fontFamily="Liberation Sans, sans-serif" fontWeight="700">
        Bai
      </text>
      <ellipse cx="147" cy="49" rx="15" ry="19" />
      <ellipse cx="174" cy="21" rx="14" ry="19" />
      <ellipse cx="208" cy="24" rx="15" ry="19" transform="rotate(10 208 24)" />
      <ellipse cx="229" cy="57" rx="15" ry="18" />
      <path d="M188 52 C203 53 208 68 220 78 C234 90 240 102 233 114 C224 130 205 122 188 122 C170 122 152 130 143 114 C136 100 143 89 157 79 C168 69 173 52 188 52 Z" />
      <text x="154" y="112" fontSize="54" fontFamily="Liberation Sans, sans-serif" fontWeight="700" stroke="#c9cacc" strokeWidth="2">
        du
      </text>
      <text x="249" y="118" fontSize="66" fontFamily="Noto Sans CJK SC, sans-serif" fontWeight="900">
        经验
      </text>
    </Svg>
    <MarkUrl>jingyan.baidu.com</MarkUrl>
  </Watermark>
);

const Workspace = () => (
  <Main>
    <Sidebar>
      <SideTabs>
        <Collapse aria-label="收起">
          <Icon w={17} h={16}>
            <path d="M8 1 L2 8 L8 15 M15 1 L9 8 L15 15" />
          </Icon>
        </Collapse>
        <SideTab>大纲</SideTab>
        <SideTab $on>幻灯片</SideTab>
      </SideTabs>
      <ThumbRow>
        <ThumbNumber>1</ThumbNumber>
        <Thumb aria-label="幻灯片 1">
          <ThumbSlide>
            {[0, 1].map((r) =>
              [0, 1].map((c) => (
                <React.Fragment key={`${r}${c}`}>
                  <Mini $x={51 + c * 103} $y={73 + r * 51} $w={25} $h={25} $c={pink} />
                  <Mini $x={86 + c * 103} $y={70 + r * 54} $w={2} $h={32} $c={teal} />
                </React.Fragment>
              )),
            )}
          </ThumbSlide>
        </Thumb>
      </ThumbRow>
      <AddSlide aria-label="新建幻灯片">
        <Icon sw={2.6} color="#56627f">
          <path d="M12 0 V24 M0 12 H24" />
        </Icon>
      </AddSlide>
    </Sidebar>
    <Editor>
      <Canvas>
        <Slide>
          <FloatTools />
          {spots.map(([x, y, cx, cy], i) => (
            <React.Fragment key={i}>
              <Square $x={x} $y={y} />
              <Connector $x={cx} $y={cy}>
                <Handle />
                <Stem />
                <Handle />
              </Connector>
            </React.Fragment>
          ))}
        </Slide>
      </Canvas>
      <ScrollTrack>
        <TrackArrow aria-label="向上">
          <Icon w={10} h={5}>
            <path d="M0 5 L5 0 L10 5 Z" fill="#c9cbd0" stroke="none" />
          </Icon>
        </TrackArrow>
        <TrackArrow $push aria-label="向下">
          <Icon w={10} h={5}>
            <path d="M0 0 L5 5 L10 0 Z" fill="#c9cbd0" stroke="none" />
          </Icon>
        </TrackArrow>
        <TrackArrow aria-label="上一张">
          <Icon w={10} h={12}>
            <path d="M0 5 L5 0 L10 5 Z M0 12 L5 7 L10 12 Z" fill="#c9cbd0" stroke="none" />
          </Icon>
        </TrackArrow>
        <TrackArrow aria-label="下一张">
          <Icon w={10} h={12}>
            <path d="M0 0 L5 5 L10 0 Z M0 7 L5 12 L10 7 Z" fill="#c9cbd0" stroke="none" />
          </Icon>
        </TrackArrow>
      </ScrollTrack>
      <Notes>
        <Icon color={ink}>
          <path d="M0 3 H24 M0 11 H24 M0 19 H12 M15 19 H24 M19 15 V23" />
        </Icon>
        单击此处添加备注
      </Notes>
      <Mark />
    </Editor>
    <Dock>
      <Icon h={8} sw={1} color="#c9cbd0">
        <path d="M0 1 H24 M0 6 H24" />
      </Icon>
      <IconButton aria-label="属性">
        <Icon>
          <circle cx="4" cy="5" r="3" />
          <circle cx="17" cy="19" r="3" />
          <path d="M7 5 H24 M0 19 H14 M20 19 H24" />
        </Icon>
      </IconButton>
      <IconButton aria-label="动画">
        <Icon>
          <path d="M14 2 L17 8 L23 9 L19 13 L20 19 L14 17 L9 19 L10 13 L5 9 L11 8 Z M0 16 L4 12 M2 23 L6 19 M12 24 L17 20" />
        </Icon>
      </IconButton>
      <IconButton aria-label="切换">
        <Icon>
          <path d="M18 2 H1 V20 H12 M9 16 L13 20 L9 24 M5 14 V7 H23 V22 H17" />
        </Icon>
      </IconButton>
      <IconButton aria-label="帮助">
        <Icon>
          <circle cx="12" cy="12" r="11" />
          <path d="M8 10 C8 4 17 5 16 10 C16 12 12 12 12 15 M12 17 V19" />
        </Icon>
      </IconButton>
      <IconButton aria-label="资源">
        <Icon>
          <path d="M2 9 H22 V22 H2 Z M4 5 H20 M6 2 H18 M8 14 L12 18 L16 14" />
        </Icon>
      </IconButton>
      <Meter>
        <MeterBars />
      </Meter>
      <DockFoot>
        <DockFootButton aria-label="更多">
          <Icon w={26} h={24} sw={2}>
            <circle cx="4" cy="12" r="2" />
            <circle cx="13" cy="12" r="2" />
            <circle cx="22" cy="12" r="2" />
          </Icon>
        </DockFootButton>
      </DockFoot>
    </Dock>
  </Main>
);

const Status = () => (
  <StatusBar>
    <span>幻灯片 1 / 1</span>
    <Rule $h={22} $l={17} $r={15} />
    <span>默认设计模板</span>
    <Rule $h={22} $l={16} />
    <StatusRight>
      <IconButton $color="#62666e">
        <Icon>
          <path d="M8 5 L12 1 L16 5 M3 7 L12 12 L21 7 V17 L17 20 M3 7 V17 L12 23 V12" />
        </Icon>
        智能美化
        <Rule $h={0} $l={0} $r={2} />
        <Caret $up />
      </IconButton>
      <Rule $h={22} $l={17} />
      <IconButton>
        <Icon>
          <path d="M0 4 H11 M0 12 H24 M0 20 H24 M14 2 L18 8 L23 2" />
        </Icon>
        备注
        <Caret />
      </IconButton>
      <Rule $h={0} $l={0} $r={13} />
      <IconButton>
        <Icon>
          <path d="M11 2 H2 V23 L6 20 H22 V13 M18 0 V12 M12 6 H24" />
        </Icon>
        批注
      </IconButton>
      <Rule $h={22} $l={15} $r={10} />
      <ViewSwitch>
        <ViewButton $on aria-label="普通视图">
          <Icon>
            <path d="M1 2 H23 V22 H1 Z M8 2 V22 M8 15 H23" />
          </Icon>
        </ViewButton>
        <ViewButton aria-label="浏览视图">
          <Icon>
            <path d="M2 2 H9 V9 H2 Z M15 2 H22 V9 H15 Z M2 15 H9 V22 H2 Z M15 15 H22 V22 H15 Z" />
          </Icon>
        </ViewButton>
        <ViewButton aria-label="阅读视图">
          <Icon>
            <path d="M12 4 L10 2 H1 V20 H9 L12 23 L15 20 H23 V2 H14 L12 4 V22" />
          </Icon>
        </ViewButton>
      </ViewSwitch>
      <Rule $h={22} $l={12} $r={10} />
      <PlayButton aria-label="播放">
        <Icon w={14} h={18}>
          <path d="M0 0 H2 L14 9 L2 18 H0 Z" fill="#fff" stroke="none" />
        </Icon>
      </PlayButton>
      <Caret />
      <Rule $h={22} $l={13} $r={15} />
      <IconButton aria-label="适应窗口">
        <Icon>
          <path d="M2 7 V2 H7 M17 2 H22 V7 M22 17 V22 H17 M7 22 H2 V17 M7 6 H17 V18 H7 Z" />
        </Icon>
      </IconButton>
      <Rule $h={0} $l={0} $r={10} />
      <IconButton $gap={7}>
        90%
        <Caret />
      </IconButton>
      <Rule $h={0} $l={0} $r={14} />
      <ZoomGroup>
        <IconButton aria-label="缩小">
          <Icon w={20} h={20} sw={3}>
            <path d="M2 10 H18" />
          </Icon>
        </IconButton>
        <ZoomSlider type="range" aria-label="缩放" defaultValue={43} />
        <IconButton aria-label="放大">
          <Icon w={20} h={20} sw={3}>
            <path d="M2 10 H18 M10 2 V18" />
          </Icon>
        </IconButton>
      </ZoomGroup>
    </StatusRight>
  </StatusBar>
);

export default function App() {
  return (
    <Page>
      <GlobalStyle />
      <Top />
      <Tools />
      <Workspace />
      <Status />
    </Page>
  );
}
